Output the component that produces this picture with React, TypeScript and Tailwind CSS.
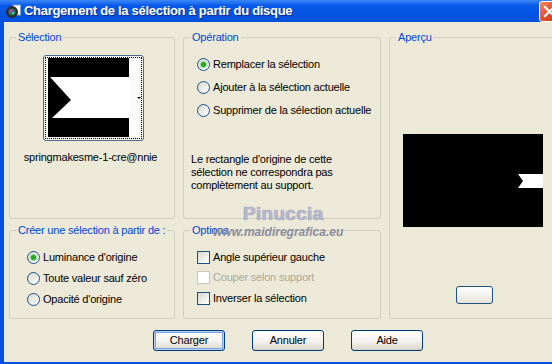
import React from "react";

const Radio = ({ checked, label }: { checked?: boolean; label: string }) => (
  <div className="flex h-[16px] items-center gap-[3px]">
    <span className="flex h-[13px] w-[13px] shrink-0 items-center justify-center rounded-full border border-[#1c5180] bg-linear-to-br from-[#d8d8d0] to-white">
      {checked && (
        <span className="h-[5px] w-[5px] rounded-full bg-[#26a626] shadow-[0_0_0_1px_#9ad89a]" />
      )}
    </span>
    <span>{label}</span>
  </div>
);

const Check = ({ label, disabled }: { label: string; disabled?: boolean }) => (
  <div className="flex h-[16px] items-center gap-[3px]">
    <span
      className={`h-[13px] w-[13px] shrink-0 border ${
        disabled
          ? "border-[#cac8bb] bg-white"
          : "border-[#1c5180] bg-linear-to-br from-[#d8d8d0] to-white"
      }`}
    />
    <span className={disabled ? "text-[#aca899]" : ""}>{label}</span>
  </div>
);

const Group = ({
  title,
  className,
  children,
}: {
  title: string;
  className?: string;
  children?: React.ReactNode;
}) => (
  <fieldset className={`min-w-0 rounded-[3px] border border-[#d0d0bf] ${className ?? ""}`}>
    <legend className="ml-[6px] px-[2px] leading-[13px] text-[#0046d5]">{title}</legend>
    {children}
  </fieldset>
);

const Btn = ({ label, isDefault }: { label: string; isDefault?: boolean }) => (
  <button
    className={`h-[21px] w-[72px] rounded-[3px] border border-[#003c74] bg-linear-to-b from-white via-[#f4f3ee] to-[#dcd7cb] text-[11px] text-black ${
      isDefault
        ? "shadow-[inset_0_0_0_1px_#b6cff3,inset_0_0_0_2px_#7aa4e4]"
        : "shadow-[inset_0_-1px_0_#d6d0c5]"
    }`}
  >
    {label}
  </button>
);

const Thumbnail = () => (
  <div className="relative h-[86px] w-[101px] rounded-[3px] border border-[#4a6a8c] bg-[#f4f4f0]">
    <svg width="99" height="84" viewBox="0 0 99 84" className="block">
      <rect x="85" y="2" width="10" height="79" fill="#fcfcfc" />
      <rect x="4" y="2" width="81" height="19" fill="#000" />
      <rect x="4" y="21" width="81" height="41" fill="#fff" />
      <rect x="4" y="62" width="81" height="19" fill="#000" />
      <polygon points="4,21 6,21 27,44 8,62 4,62" fill="#000" />
      <polygon points="93,41 97,41 95,43" fill="#000" />
    </svg>
    <div className="absolute inset-[1px] border border-dotted border-black" />
  </div>
);

const App = () => {
  return (
    <div className="relative h-[364px] w-[552px] overflow-hidden font-['Liberation_Sans',Arial,sans-serif] text-[11px] tracking-[-0.2px] text-black">
      <div className="w-[568px]">
        {/* title bar */}
        <div className="flex h-[22px] items-center bg-linear-to-b from-[#3a88f6] from-0% via-[#0759e9] via-25% to-[#0250dd]">
          <svg width="16" height="16" viewBox="0 0 16 16" className="ml-[5px] shrink-0">
            <rect x="8" y="2" width="7.5" height="10" fill="#fff" stroke="#7aa0d8" strokeWidth="1" />
            <circle cx="7" cy="9" r="6" fill="#2b2b2b" />
            <circle cx="7" cy="9" r="3.6" fill="#1f7a3a" />
            <circle cx="6" cy="8" r="1.8" fill="#c03ac8" />
            <circle cx="8.2" cy="10" r="1.2" fill="#3ad0e0" />
          </svg>
          <span className="ml-[3px] text-[13px] font-bold tracking-[-0.3px] text-white [text-shadow:1px_1px_0_#0b2b8a]">
            Chargement de la sélection à partir du disque
          </span>
          <div className="ml-auto mr-[8px] flex h-[21px] w-[21px] items-center justify-center rounded-[3px] border border-white bg-linear-to-br from-[#f08a62] via-[#e0502b] to-[#c23a18]">
            <svg width="13" height="13" viewBox="0 0 13 13">
              <path d="M2 2 L11 11 M11 2 L2 11" stroke="#fff" strokeWidth="2.2" strokeLinecap="square" />
            </svg>
          </div>
        </div>

        {/* body */}
        <div className="flex h-[344px] flex-col border-x-4 border-b-4 border-[#0352e2] bg-[#ece9d8] pl-[5px] pt-[9px]">
          <div className="grid grid-cols-[166px_198px_167px] grid-rows-[188px_95px] gap-x-[8px] gap-y-[5px]">
            <Group title="Sélection">
              <div className="ml-[33px] mt-[11px]">
                <Thumbnail />
              </div>
              <div className="mt-[10px] pr-[3px] text-center leading-[13px]">springmakesme-1-cre@nnie</div>
            </Group>

            <Group title="Opération">
              <div className="ml-[13px] mt-[12px] flex flex-col gap-[7px]">
                <Radio checked label="Remplacer la sélection" />
                <Radio label="Ajouter à la sélection actuelle" />
                <Radio label="Supprimer de la sélection actuelle" />
              </div>
              <p className="ml-[7px] mt-[35px] leading-[13px]">
                Le rectangle d'origine de cette
                <br />
                sélection ne correspondra pas
                <br />
                complètement au support.
              </p>
            </Group>

            <Group title="Aperçu" className="row-span-2">
              <div className="ml-[13px] mt-[90px] h-[93px] w-[140px] bg-black">
                <svg width="140" height="93" viewBox="0 0 140 93" className="block">
                  <polygon points="115,40 140,40 140,54 115,54 120,47" fill="#fff" />
                </svg>
              </div>
              <div className="ml-[66px] mt-[59px] h-[18px] w-[37px] rounded-[3px] border border-[#1c5180] bg-linear-to-b from-white to-[#e6e3d8]" />
            </Group>

            <Group title="Créer une sélection à partir de :">
              <div className="ml-[17px] mt-[12px] flex flex-col gap-[5px]">
                <Radio checked label="Luminance d'origine" />
                <Radio label="Toute valeur sauf zéro" />
                <Radio label="Opacité d'origine" />
              </div>
            </Group>

            <Group title="Options">
              <div className="ml-[13px] mt-[12px] flex flex-col gap-[4.5px]">
                <Check label="Angle supérieur gauche" />
                <Check disabled label="Couper selon support" />
                <Check label="Inverser la sélection" />
              </div>
            </Group>
          </div>

          <div className="ml-[144px] mt-[11px] flex gap-[27px]">
            <Btn isDefault label="Charger" />
            <Btn label="Annuler" />
            <Btn label="Aide" />
          </div>
        </div>
      </div>

      {/* watermark */}
      <div className="pointer-events-none absolute left-[243px] top-[204px] text-[19px] font-bold leading-[19px] tracking-[0.3px] text-[#b7b7cf] [text-shadow:0_0_1px_#6e6e88]">
        Pinuccia
      </div>
      <div className="pointer-events-none absolute left-[213px] top-[226px] text-[12px] font-semibold italic leading-[12px] tracking-[0px] text-[#8d8d9c]">
        www.maidiregrafica.eu
      </div>
    </div>
  );
};

export default App;
